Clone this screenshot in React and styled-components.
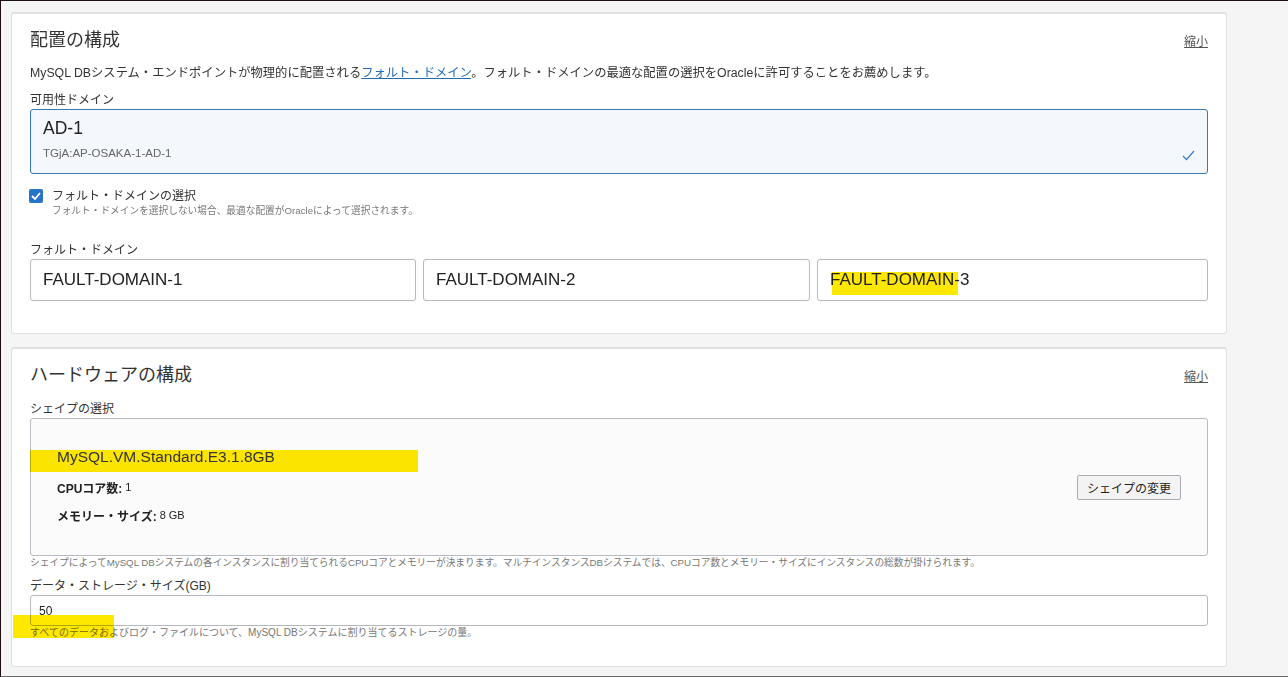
import React from "react";
import styled, { createGlobalStyle } from "styled-components";

const GlobalStyle = createGlobalStyle`
  body {
    margin: 0;
    font-family: "Liberation Sans", "Noto Sans CJK JP", sans-serif;
    color: #333;
  }
`;

const Frame = styled.div`
  box-sizing: border-box;
  height: 677px;
  border-top: 1px solid #1b0f0f;
  border-left: 1px solid #1b0f0f;
  border-bottom: 1px solid #6b6b6b;
  background: #f5f5f5;
  padding: 11px 0 0 10px;
  display: flex;
  flex-direction: column;
  gap: 13px;
  overflow: hidden;
`;

const Card = styled.section`
  position: relative;
  box-sizing: border-box;
  width: 1216px;
  background: #fff;
  border: 1px solid #e0e0e4;
  border-top-width: 2px;
  border-radius: 3px;
  padding: ${(p) => p.$top}px 18px ${(p) => p.$bottom}px 18px;
`;

const Header = styled.div`
  display: flex;
  justify-content: space-between;
  align-items: center;
  height: 24px;
`;

const Title = styled.h2`
  margin: 0;
  font-size: 18px;
  font-weight: 400;
  line-height: 24px;
  color: #333;
`;

const Collapse = styled.a`
  font-size: 12px;
  color: #555;
  text-decoration: underline;
`;

const Description = styled.p`
  margin: 12px 0 0;
  font-size: 12.3px;
  line-height: 18px;
  color: #333;
`;

const Link = styled.a`
  color: #1f6bb5;
  text-decoration: underline;
`;

const Label = styled.div`
  margin-top: ${(p) => p.$mt}px;
  font-size: 12px;
  line-height: 18px;
  color: #333;
`;

const SelectBox = styled.div`
  box-sizing: border-box;
  height: 65px;
  border: 1px solid #3a77b8;
  border-radius: 3px;
  background: #f4f7fb;
  padding: 10px 12px 12px;
  display: flex;
  justify-content: space-between;
  align-items: flex-end;
`;

const SelectMain = styled.div`
  font-size: 17.5px;
  line-height: 22px;
  color: #222;
`;

const SelectSub = styled.div`
  margin-top: 6px;
  font-size: 11.5px;
  line-height: 16px;
  color: #666;
`;

const CheckRow = styled.div`
  margin-top: 14px;
  margin-left: -1px;
  display: flex;
  gap: 9px;
  align-items: flex-start;
`;

const CheckBox = styled.span`
  margin-top: 1px;
  width: 14px;
  height: 14px;
  border-radius: 2px;
  background: #2873c6;
  display: flex;
  align-items: center;
  justify-content: center;
  flex-shrink: 0;
`;

const CheckLabel = styled.div`
  font-size: 12px;
  line-height: 16px;
  color: #333;
`;

const Hint = styled.div`
  font-size: ${(p) => p.$fs || 10}px;
  line-height: 14px;
  color: #777;
`;

const InputGrid = styled.div`
  display: grid;
  grid-template-columns: 386px 387px 1fr;
  gap: 7px;
`;

const TextField = styled.div`
  position: relative;
  box-sizing: border-box;
  height: ${(p) => p.$h}px;
  border: 1px solid #b5b8bd;
  border-radius: 3px;
  background: #fff;
  padding-left: ${(p) => p.$pl}px;
  display: flex;
  align-items: center;
  font-size: ${(p) => p.$fs}px;
  color: #222;
`;

const FieldText = styled.span`
  position: relative;
  z-index: 1;
`;

const Marker = styled.span`
  position: absolute;
  background: #ffe800;
  left: ${(p) => p.$x}px;
  top: ${(p) => p.$y}px;
  width: ${(p) => p.$w}px;
  height: ${(p) => p.$h}px;
  mix-blend-mode: multiply;
`;

const ShapeBox = styled.div`
  position: relative;
  box-sizing: border-box;
  height: 138px;
  border: 1px solid #b8bcc2;
  border-radius: 3px;
  background: #fbfbfc;
  padding: 0 26px;
  display: flex;
  justify-content: space-between;
  align-items: center;
`;

const ShapeInfo = styled.div`
  position: relative;
  z-index: 1;
  display: flex;
  flex-direction: column;
`;

const ShapeName = styled.div`
  font-size: 15.5px;
  line-height: 18px;
  color: #333;
`;

const Spec = styled.div`
  margin-top: ${(p) => p.$mt}px;
  font-size: 12px;
  line-height: 18px;
  color: #222;

  b {
    font-weight: 700;
  }

  span {
    font-size: 11px;
    vertical-align: 2px;
    margin-left: 3px;
  }
`;

const Button = styled.button`
  box-sizing: border-box;
  width: 104px;
  height: 25px;
  background: #f3f3f3;
  border: 1px solid #a9adb3;
  border-radius: 2px;
  font-family: inherit;
  font-size: 12px;
  color: #222;
  padding: 0;
`;

const faults = ["FAULT-DOMAIN-1", "FAULT-DOMAIN-2", "FAULT-DOMAIN-3"];

const App = () => {
  return (
    <>
      <GlobalStyle />
      <Frame>
        <Card $top={14} $bottom={32}>
          <Header>
            <Title>配置の構成</Title>
            <Collapse>縮小</Collapse>
          </Header>
          <Description>
            MySQL DBシステム・エンドポイントが物理的に配置される
            <Link>フォルト・ドメイン</Link>
            。フォルト・ドメインの最適な配置の選択をOracleに許可することをお薦めします。
          </Description>
          <Label $mt={9}>可用性ドメイン</Label>
          <SelectBox>
            <div>
              <SelectMain>AD-1</SelectMain>
              <SelectSub>TGjA:AP-OSAKA-1-AD-1</SelectSub>
            </div>
            <svg width="13" height="11" viewBox="0 0 13 11">
              <polyline points="1,6 4.5,9.5 12,1" fill="none" stroke="#3a7fc4" strokeWidth="1.2" />
            </svg>
          </SelectBox>
          <CheckRow>
            <CheckBox>
              <svg width="10" height="8" viewBox="0 0 10 8">
                <polyline points="1,4 4,7 9,1" fill="none" stroke="#fff" strokeWidth="1.8" />
              </svg>
            </CheckBox>
            <div>
              <CheckLabel>フォルト・ドメインの選択</CheckLabel>
              <Hint $fs={9.7}>フォルト・ドメインを選択しない場合、最適な配置がOracleによって選択されます。</Hint>
            </div>
          </CheckRow>
          <Label $mt={23}>フォルト・ドメイン</Label>
          <InputGrid>
            {faults.map((f, i) => (
              <TextField key={f} $h={42} $pl={12} $fs={17}>
                {i === 2 && <Marker $x={14} $y={12} $w={126} $h={23} />}
                <FieldText>{f}</FieldText>
              </TextField>
            ))}
          </InputGrid>
        </Card>

        <Card $top={14} $bottom={26}>
          <Header>
            <Title>ハードウェアの構成</Title>
            <Collapse>縮小</Collapse>
          </Header>
          <Label $mt={13}>シェイプの選択</Label>
          <ShapeBox>
            <Marker $x={-1} $y={31} $w={388} $h={22} />
            <ShapeInfo>
              <ShapeName>MySQL.VM.Standard.E3.1.8GB</ShapeName>
              <Spec $mt={12}>
                <b>CPUコア数:</b>
                <span>1</span>
              </Spec>
              <Spec $mt={8}>
                <b>メモリー・サイズ:</b>
                <span>8 GB</span>
              </Spec>
            </ShapeInfo>
            <Button>シェイプの変更</Button>
          </ShapeBox>
          <Hint $fs={9.7}>
            シェイプによってMySQL DBシステムの各インスタンスに割り当てられるCPUコアとメモリーが決まります。マルチインスタンスDBシステムでは、CPUコア数とメモリー・サイズにインスタンスの総数が掛けられます。
          </Hint>
          <Label $mt={7}>データ・ストレージ・サイズ(GB)</Label>
          <TextField $h={31} $pl={8} $fs={12}>
            <FieldText>50</FieldText>
          </TextField>
          <Hint>すべてのデータおよびログ・ファイルについて、MySQL DBシステムに割り当てるストレージの量。</Hint>
          <Marker $x={1} $y={266} $w={101} $h={23} />
        </Card>
      </Frame>
    </>
  );
};

export default App;
